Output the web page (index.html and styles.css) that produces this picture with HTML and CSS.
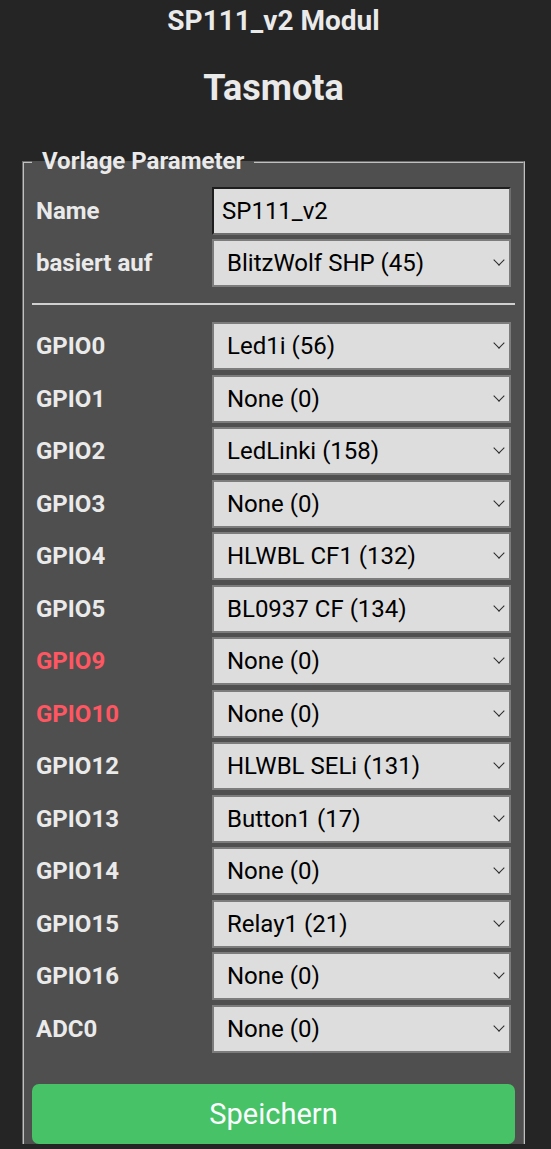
FILE: index.html
```html
<!DOCTYPE html>
<html>
  <head>
  <meta charset="utf-8">
  <title>SP111_v2 Modul - Vorlage</title>
  <link rel="stylesheet" href="styles.css">
  </head>
  <body>

  <div class="page">
    <div class="head">
      <h3>SP111_v2 Modul</h3>
      <h2>Tasmota</h2>
    </div>

    <form onsubmit="return false;">
    <fieldset class="tpl">
      <legend>&nbsp;Vorlage Parameter&nbsp;</legend>

      <div class="params">
        <label for="s1">Name</label>
        <input id="s1" class="fld" value="SP111_v2">
        <label for="g99">basiert auf</label>
        <div class="sel"><select id="g99" class="fld"><option>BlitzWolf SHP (45)</option></select></div>
      </div>

      <hr>

      <div class="params gpio" id="gpio_list"></div>

      <button class="bgrn">Speichern</button>
    </fieldset>
    </form>
  </div>

  <script>
  /*
    Build the GPIO rows: label plus a select with the current component.
    Flash pins (GPIO9/10) get the warning colour.
  */
    var pins = [
      ["GPIO0", "Led1i (56)"],
      ["GPIO1", "None (0)"],
      ["GPIO2", "LedLinki (158)"],
      ["GPIO3", "None (0)"],
      ["GPIO4", "HLWBL CF1 (132)"],
      ["GPIO5", "BL0937 CF (134)"],
      ["GPIO9", "None (0)", true],
      ["GPIO10", "None (0)", true],
      ["GPIO12", "HLWBL SELi (131)"],
      ["GPIO13", "Button1 (17)"],
      ["GPIO14", "None (0)"],
      ["GPIO15", "Relay1 (21)"],
      ["GPIO16", "None (0)"],
      ["ADC0", "None (0)"]
    ];

    var gl = document.getElementById('gpio_list');

    for (var i = 0; i < pins.length; i++) {
      var lbl = document.createElement("label");
      lbl.appendChild(document.createTextNode(pins[i][0]));
      if (pins[i][2]) {
        lbl.className = "warn";
      }
      lbl.htmlFor = "g" + i;

      var wrap = document.createElement("div");
      wrap.className = "sel";
      var sel = document.createElement("select");
      sel.className = "fld";
      sel.id = "g" + i;
      var option = document.createElement("option");
      option.text = option.value = pins[i][1];
      sel.add(option, sel.length);
      wrap.appendChild(sel);

      gl.appendChild(lbl);
      gl.appendChild(wrap);
    }
  </script>
  </body>
</html>
```

FILE: styles.css
```css
body {
  margin: 0;
  background: #252525;
  color: #eaeaea;
  font-family: Roboto, "Liberation Sans", sans-serif;
  font-size: 24px;
}
.page {
  width: 503px;
  margin-left: 22px;
}
.head {
  text-align: center;
}
h3 {
  margin: 5px 0 0 0;
  font-size: 28px;
  line-height: 32px;
}
h2 {
  margin: 31px 0 40px 0;
  font-size: 36px;
  line-height: 40px;
}
.tpl {
  box-sizing: border-box;
  width: 503px;
  margin: 0;
  padding: 8px 8px 0 8px;
  background: #4f4f4f;
  border: 2px groove #c0c0c0;
  border-bottom: none;
}
legend {
  padding: 0 4px;
  font-weight: bold;
  line-height: 27px;
}
.params {
  display: grid;
  grid-template-columns: 172px 1fr;
  gap: 4px;
  padding: 4px;
  align-items: center;
}
.gpio {
  row-gap: 4.5px;
}
label {
  font-weight: bold;
}
.warn {
  color: #ff5661;
}
.fld {
  box-sizing: border-box;
  width: 100%;
  height: 48px;
  margin: 0;
  font: inherit;
  color: #000000;
  background: #dddddd;
  outline: none;
}
input.fld {
  padding: 0 8px;
  border: 2px solid;
  border-color: #1e1e1e #6e6e6e #6e6e6e #1e1e1e;
}
select.fld {
  -webkit-appearance: none;
  appearance: none;
  padding: 0 30px 0 13px;
  border: 2px solid #7c7c7c;
  border-radius: 0;
}
.sel {
  position: relative;
}
.sel::after {
  content: "";
  position: absolute;
  right: 8px;
  top: calc(50% - 7px);
  width: 7px;
  height: 7px;
  border-right: 1.5px solid #2a2a2a;
  border-bottom: 1.5px solid #2a2a2a;
  transform: rotate(45deg);
  pointer-events: none;
}
hr {
  height: 0;
  margin: 12px 0 13px 0;
  border: 0;
  border-top: 2px solid #d0d0d0;
}
button {
  display: block;
  width: 100%;
  height: 60px;
  margin-top: 27.5px;
  border: 0;
  border-radius: 7px;
  font-family: inherit;
  font-size: 29px;
  color: #faffff;
  cursor: pointer;
}
.bgrn {
  background: #47c266;
}
```
